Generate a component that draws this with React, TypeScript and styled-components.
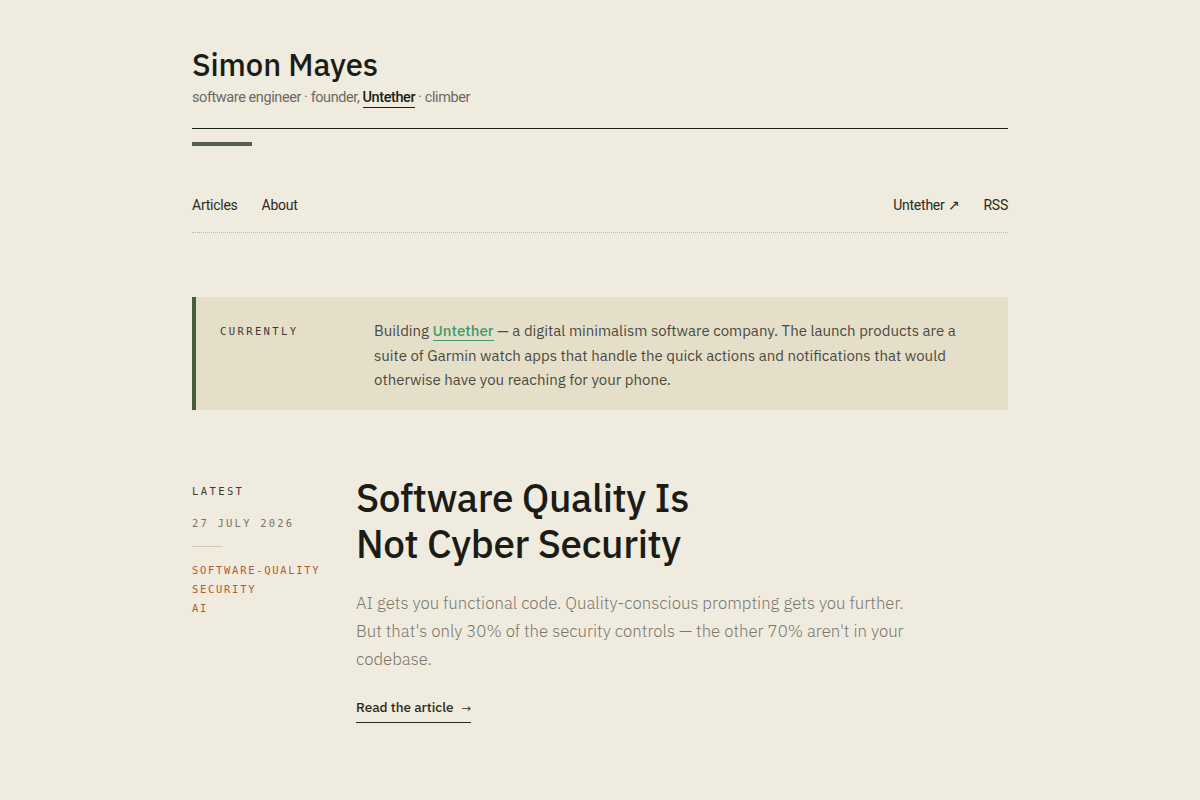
import React from "react";
import styled, { createGlobalStyle } from "styled-components";

const Global = createGlobalStyle`
  html, body { margin: 0; padding: 0; background: #f0ebdf; }
  body { font-family: "IBM Plex Sans", Roboto, "Noto Sans", sans-serif; color: #1c1c16; -webkit-font-smoothing: antialiased; }
  a { color: inherit; text-decoration: none; }
`;

const Page = styled.div`
  width: 816px;
  margin: 0 auto;
  padding-top: 46px;
  padding-bottom: 60px;
`;

const Header = styled.header`
  display: flex;
  flex-direction: column;
`;

const Name = styled.h1`
  margin: 0;
  font-size: 31px;
  font-weight: 500;
  line-height: 38px;
  letter-spacing: -0.1px;
  color: #1c1c16;
`;

const Tagline = styled.p`
  margin: 4px 0 0;
  font-family: Roboto, "Noto Sans", sans-serif;
  font-size: 14.5px;
  line-height: 20px;
  letter-spacing: -0.42px;
  color: #6b6a5e;
`;

const TagLink = styled.a`
  color: #1c1c16;
  font-weight: 500;
  border-bottom: 1px solid #1c1c16;
  padding-bottom: 1px;
`;

const Rule = styled.div`
  margin-top: 20px;
  height: 1px;
  background: #1c1c16;
`;

const Accent = styled.div`
  margin-top: 13px;
  width: 60px;
  height: 4px;
  background: #55604a;
`;

const Nav = styled.nav`
  margin-top: 50px;
  display: flex;
  justify-content: space-between;
  align-items: center;
  padding-bottom: 18px;
  border-bottom: 1px dotted #bdb8a8;
`;

const NavGroup = styled.div`
  display: flex;
  gap: 24px;
`;

const NavLink = styled.a`
  font-family: Roboto, "Noto Sans", sans-serif;
  font-size: 14px;
  line-height: 18px;
  letter-spacing: -0.25px;
  color: #2a2a22;
`;

const Callout = styled.section`
  margin-top: 64px;
  display: grid;
  grid-template-columns: 154px 1fr;
  padding: 22px 48px 17px 24px;
  background: #e5dfca;
  border-left: 4px solid #4a5a3e;
`;

const MonoLabel = styled.div<{ $muted?: boolean }>`
  font-family: "DejaVu Sans Mono", "Liberation Mono", monospace;
  font-size: 10.5px;
  letter-spacing: 2.4px;
  line-height: 24px;
  color: ${(p) => (p.$muted ? "#77766a" : "#3b3b32")};
  text-transform: uppercase;
`;

const CalloutText = styled.p`
  margin: 0;
  font-size: 15px;
  line-height: 24.5px;
  color: #4a4a40;
`;

const GreenLink = styled.a`
  color: #3f9a6c;
  font-weight: 500;
  border-bottom: 1px solid #3f9a6c;
`;

const Latest = styled.section`
  margin-top: 64px;
  display: grid;
  grid-template-columns: 164px 1fr;
`;

const Meta = styled.aside`
  display: flex;
  flex-direction: column;
  padding-top: 5px;
`;

const DateLabel = styled(MonoLabel)`
  margin-top: 8px;
  letter-spacing: 2.2px;
`;

const ShortRule = styled.div`
  margin-top: 11px;
  width: 30px;
  height: 1px;
  background: #cfc9b6;
`;

const Tags = styled.ul`
  list-style: none;
  margin: 14px 0 0;
  padding: 0;
  display: flex;
  flex-direction: column;
`;

const Tag = styled.li`
  font-family: "DejaVu Sans Mono", "Liberation Mono", monospace;
  font-size: 10.5px;
  letter-spacing: 1.7px;
  line-height: 19px;
  color: #b5582d;
  text-transform: uppercase;
`;

const Article = styled.article`
  display: flex;
  flex-direction: column;
  align-items: flex-start;
  padding-top: 1px;
`;

const Title = styled.h2`
  margin: 0;
  font-size: 38.8px;
  font-weight: 500;
  line-height: 46px;
  letter-spacing: -0.4px;
  color: #1c1c16;
  max-width: 370px;
`;

const Lede = styled.p`
  margin: 22px 0 0;
  max-width: 560px;
  font-size: 16.8px;
  font-weight: 300;
  line-height: 28px;
  color: #7a786b;
`;

const ReadMore = styled.a`
  margin-top: 24px;
  display: inline-flex;
  align-items: center;
  gap: 8px;
  font-size: 13.5px;
  font-weight: 500;
  line-height: 18px;
  color: #2a2a22;
  padding-bottom: 4px;
  border-bottom: 1px solid #2a2a22;
`;

const Arrow = styled.span`
  font-size: 12px;
  font-weight: 400;
  padding-top: 3px;
`;

export default function App() {
  return (
    <>
      <Global />
      <Page>
        <Header>
          <Name>Simon Mayes</Name>
          <Tagline>
            software engineer · founder, <TagLink href="#">Untether</TagLink> · climber
          </Tagline>
          <Rule />
          <Accent />
        </Header>
        <Nav>
          <NavGroup>
            <NavLink href="#">Articles</NavLink>
            <NavLink href="#">About</NavLink>
          </NavGroup>
          <NavGroup>
            <NavLink href="#">Untether ↗</NavLink>
            <NavLink href="#">RSS</NavLink>
          </NavGroup>
        </Nav>
        <Callout>
          <MonoLabel>Currently</MonoLabel>
          <CalloutText>
            Building <GreenLink href="#">Untether</GreenLink> — a digital minimalism software company. The
            launch products are a suite of Garmin watch apps that handle the quick actions and
            notifications that would otherwise have you reaching for your phone.
          </CalloutText>
        </Callout>
        <Latest>
          <Meta>
            <MonoLabel>Latest</MonoLabel>
            <DateLabel $muted>27 July 2026</DateLabel>
            <ShortRule />
            <Tags>
              <Tag>software-quality</Tag>
              <Tag>security</Tag>
              <Tag>ai</Tag>
            </Tags>
          </Meta>
          <Article>
            <Title>Software Quality Is Not Cyber Security</Title>
            <Lede>
              AI gets you functional code. Quality-conscious prompting gets you further. But that's
              only 30% of the security controls — the other 70% aren't in your codebase.
            </Lede>
            <ReadMore href="#">
              Read the article <Arrow>→</Arrow>
            </ReadMore>
          </Article>
        </Latest>
      </Page>
    </>
  );
}
